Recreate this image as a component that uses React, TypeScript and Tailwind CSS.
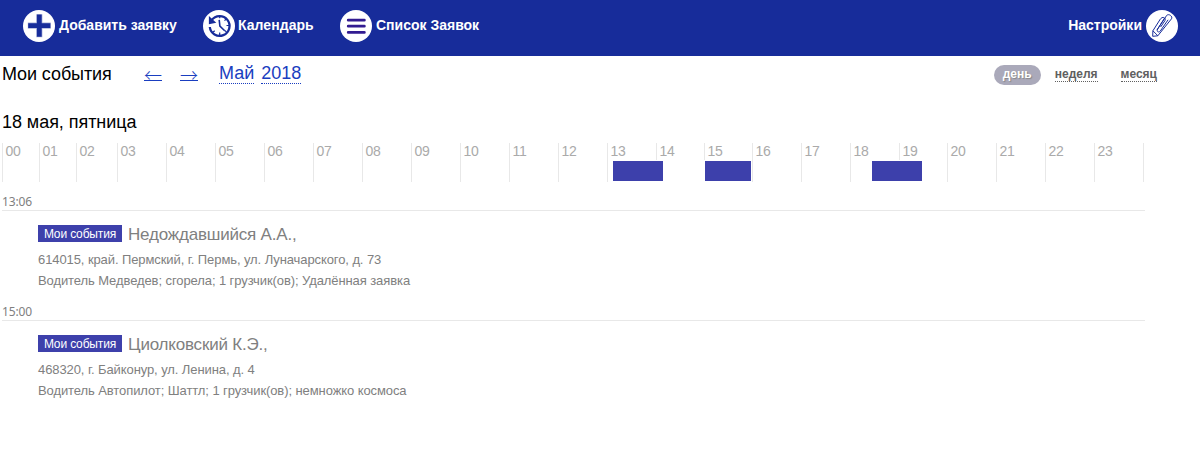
import type { ReactNode } from "react";

const hours = [37, 37, 41, 49, 49, 49, 49, 49, 49, 49, 49, 49, 49, 49, 48, 48, 49, 49, 49, 48, 49, 49, 49, 49];

const bars = [
  { left: 610, width: 52 },
  { left: 702, width: 48 },
  { left: 869, width: 52 },
];

const events = [
  {
    time: "13:06",
    title: "Недождавшийся А.А.,",
    address: "614015, край. Пермский, г. Пермь, ул. Луначарского, д. 73",
    note: "Водитель Медведев; сгорела; 1 грузчик(ов); Удалённая заявка",
  },
  {
    time: "15:00",
    title: "Циолковский К.Э.,",
    address: "468320, г. Байконур, ул. Ленина, д. 4",
    note: "Водитель Автопилот; Шаттл; 1 грузчик(ов); немножко космоса",
  },
];

function Disc({ children }: { children: ReactNode }) {
  return (
    <svg width="32" height="32" viewBox="0 0 32 32" fill="none" className="shrink-0">
      <circle cx="16" cy="16" r="16" fill="#fff" />
      {children}
    </svg>
  );
}

function PlusIcon() {
  return (
    <Disc>
      <path d="M16.3 4.2v23M4.8 15.7h23" stroke="#aab2da" strokeWidth="6.2" />
      <path d="M16.3 4.6v22.2M5.2 15.7h22.2" stroke="#172c9a" strokeWidth="4.8" />
    </Disc>
  );
}

function HistoryIcon() {
  return (
    <Disc>
      <path d="M8.6 10.2A9.9 9.9 0 1 1 6.8 17" stroke="#172c9a" strokeWidth="2.3" />
      <path d="M5.9 6v8.3l7.4-1.6z" fill="#172c9a" />
      <path d="M16.2 9.8l.7 6.3 4.8 4.7" stroke="#172c9a" strokeWidth="1.6" />
      <path d="M16.7 6v2.3M16.7 22.6V25M23.5 15.5H26M21.5 10.6l1.7-1.6M21.7 20.5l1.7 1.4M11.7 20.7l-1.8 1.6" stroke="#172c9a" strokeWidth="1.2" />
    </Disc>
  );
}

function ListIcon() {
  return (
    <Disc>
      <path d="M8.2 10.2h16.2M8.2 16.2h16.2M8.2 22.4h16.2" stroke="#321b91" strokeWidth="2.7" strokeLinecap="round" />
    </Disc>
  );
}

function ClipIcon() {
  return (
    <Disc>
      <path
        d="M14.7 8.5 6.9 20.8l-.2 5.5 5.1-.5 13.7-17c1.5-2.3-2.6-5.6-4.8-3.4L11.5 19.2c-1.2 2.4 1.2 3.8 2.8 1.8l7.8-11.2M18.6 8 11 20M6.9 20.8l5 5M15 8.4c1.8-2.3 5.5-.2 3.9 2.3l-4.3 6.3"
        stroke="#172c9a"
        strokeWidth="1"
        strokeLinejoin="round"
      />
    </Disc>
  );
}

export default function App() {
  return (
    <div className="h-[450px] w-[1200px] overflow-hidden bg-white font-['Liberation_Sans',Arial,sans-serif] text-black">
      <header className="flex h-14 items-start bg-[#172c9a] pt-[10px] pr-[22px] pl-[23px] text-[14px] font-bold text-white">
        <a className="flex w-[180px] gap-1 leading-[30px]"><PlusIcon />Добавить заявку</a>
        <a className="flex w-[137px] gap-[3px] leading-[30px] tracking-[0.05px]"><HistoryIcon />Календарь</a>
        <a className="flex gap-1 leading-[30px]"><ListIcon />Список Заявок</a>
        <a className="ml-auto flex gap-1 leading-[30px]">Настройки<ClipIcon /></a>
      </header>

      <div className="flex h-[55px] items-start pl-[2px] text-[18px]">
        <h1 className="mt-[7px] w-[142px] leading-[22px] tracking-[-0.1px]">Мои события</h1>
        <a className="mt-[7px] mr-[18px] h-[18px] w-[18px] border-b border-[#1a3ec0] font-['Noto_Sans_CJK_SC',sans-serif] leading-[22px] font-light text-[#1a3ec0]">←</a>
        <a className="mt-[7px] mr-[21px] h-[18px] w-[18px] border-b border-[#1a3ec0] font-['Noto_Sans_CJK_SC',sans-serif] leading-[22px] font-light text-[#1a3ec0]">→</a>
        <a className="mt-[7px] mr-[7px] h-[21px] border-b border-dotted border-[#1a3ec0] leading-5 text-[#1a3ec0]">Май</a>
        <a className="mt-[7px] h-[21px] border-b border-dotted border-[#1a3ec0] leading-5 text-[#1a3ec0]">2018</a>
        <nav className="mt-[9px] mr-[43px] ml-auto flex text-[12px] font-bold text-[#606060]">
          <a className="mr-[14px] h-5 w-[47px] rounded-full bg-[#aaa9ba] text-center leading-[18px] text-white [text-shadow:1px_1px_1px_#888]">день</a>
          <a className="mr-[23px] h-[17px] border-b border-dotted border-[#606060] leading-[18px]">неделя</a>
          <a className="h-[17px] border-b border-dotted border-[#606060] leading-[18px]">месяц</a>
        </nav>
      </div>

      <main className="w-[1145px] pl-[2px]">
        <h2 className="h-8 text-[18px] leading-[22px] tracking-[-0.05px]">18 мая, пятница</h2>
        <div className="relative flex h-[39px] w-[1142px] border-r border-[#e8e8e8] text-[14px] leading-[17px] tracking-[-0.3px] text-[#aaa]">
          {hours.map((width, hour) => (
            <div key={hour} className="shrink-0 border-l border-[#e8e8e8] pl-[2.5px]" style={{ width }}>
              {String(hour).padStart(2, "0")}
            </div>
          ))}
          {bars.map((bar) => (
            <div key={bar.left} className="absolute top-[17px] h-[22px] border border-white bg-[#3d40ab]" style={bar} />
          ))}
        </div>

        <div className="pt-[11px]">
          {events.map((event) => (
            <section key={event.time} className="h-[110px] text-[#808080]">
              <div className="h-[18px] border-b border-[#e8e8e8] font-['Noto_Sans',sans-serif] text-[12px] leading-[18px] tracking-[-0.15px]">
                {event.time}
              </div>
              <div className="pt-[13px] pl-9 text-[13px] leading-[21px] tracking-[-0.09px]">
                <div className="flex h-[25px] items-start">
                  <span className="mt-[1px] mr-[6px] h-[17px] w-[84px] bg-[#3d40ab] text-center text-[12px] leading-[18px] tracking-[-0.15px] text-white">Мои события</span>
                  <span className="text-[17px] leading-[21px] tracking-[-0.2px]">{event.title}</span>
                </div>
                <p>{event.address}</p>
                <p>{event.note}</p>
              </div>
            </section>
          ))}
        </div>
      </main>
    </div>
  );
}
